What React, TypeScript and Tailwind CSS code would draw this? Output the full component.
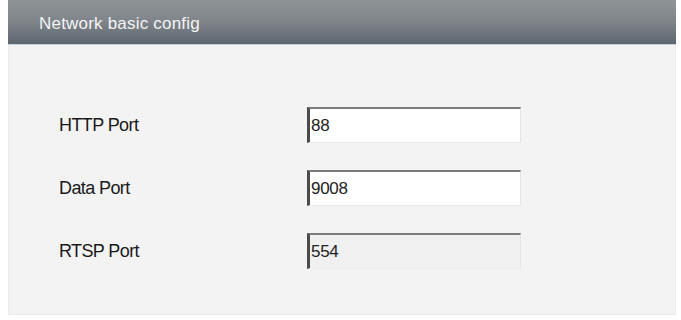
import React from "react";

const rows = [
  { label: "HTTP Port", value: "88", disabled: false },
  { label: "Data Port", value: "9008", disabled: false },
  { label: "RTSP Port", value: "554", disabled: true },
];

export default function App() {
  return (
    <div className="w-[681px] h-[320px] bg-white pl-[8px] pr-[5px] pb-[5px] flex flex-col" style={{ fontFamily: '"Liberation Sans", Arial, sans-serif' }}>
      <div className="h-[45px] shrink-0 bg-gradient-to-b from-[#8f9497] via-[#7e8489] to-[#5d6670] border-b border-[#c9d1d8] flex items-center pl-[31px] pt-[3px]">
        <span className="text-[17px] text-[#f4f4f4] tracking-[0.2px] leading-none">Network basic config</span>
      </div>
      <div className="flex-1 bg-[#f3f3f3] border-l border-r border-b border-[#eaeaea] flex flex-col pt-[62px] gap-[27px]">
        {rows.map((r) => (
          <div key={r.label} className="flex items-center h-[36px]">
            <div className="w-[298px] pl-[50px] text-[18px] tracking-[-0.6px] text-[#1a1a1a] leading-none">{r.label}</div>
            <div
              className={
                "w-[214px] h-[36px] border-t-2 border-l-[3px] border-t-[#7a7a7a] border-l-[#4a4a4a] border-r border-b border-r-[#e4e4e4] border-b-[#ececec] flex items-center pl-[1px] pb-[1px] text-[17px] tracking-[-0.3px] text-[#222] leading-none " +
                (r.disabled ? "bg-[#f0f0f0]" : "bg-white")
              }
            >
              {r.value}
            </div>
          </div>
        ))}
      </div>
    </div>
  );
}
